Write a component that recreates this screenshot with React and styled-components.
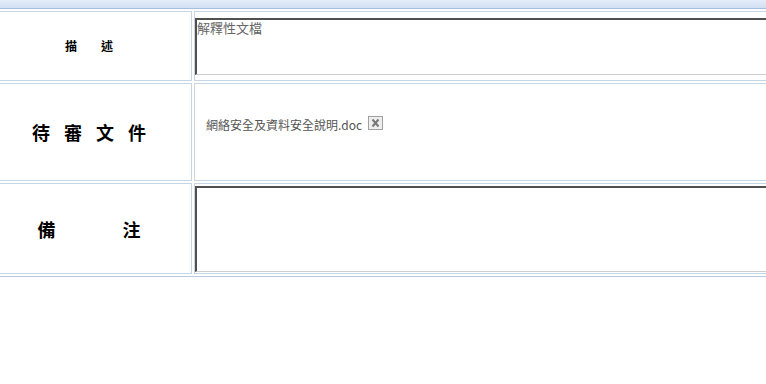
import React from 'react';
import styled, { createGlobalStyle } from 'styled-components';

const GlobalStyle = createGlobalStyle`
  html, body {
    margin: 0;
    padding: 0;
    background: #ffffff;
    overflow: hidden;
  }
  body {
    font-family: "Noto Sans CJK TC", "Noto Sans", sans-serif;
  }
`;

const Page = styled.div`
  width: 766px;
  height: 384px;
  overflow: hidden;
`;

const TopBand = styled.div`
  height: 8px;
  background: linear-gradient(#e4edf9, #d3e0f3);
`;

const FormTable = styled.table`
  width: 840px;
  margin-left: -17px;
  table-layout: fixed;
  border-collapse: separate;
  border-spacing: 2px;
  border: 1px solid #b9cbe2;
  border-top-color: #a9bedd;
`;

const LabelCol = styled.col`
  width: 206px;
`;

const LabelCell = styled.td`
  height: ${p => p.h}px;
  padding: 0;
  border: 1px solid #c6d6e3;
  vertical-align: middle;
`;

const FieldCell = styled.td`
  padding: ${p => p.pad || '0'};
  border: 1px solid #c6d6e3;
  vertical-align: middle;
`;

const Label = styled.div`
  display: flex;
  justify-content: center;
  gap: ${p => p.gap}px;
  font-size: ${p => p.size}px;
  font-weight: 700;
  color: #000;
  line-height: 1;
  span {
    display: block;
  }
`;

const TextBox = styled.textarea`
  display: block;
  width: 610px;
  height: ${p => p.h}px;
  margin: 0;
  padding: 0;
  box-sizing: border-box;
  resize: none;
  outline: none;
  border-top: 2px solid #505050;
  border-left: 2px solid #505050;
  border-right: 1px solid #cfcfcf;
  border-bottom: 1px solid #cfcfcf;
  font-family: "Noto Sans CJK TC", "Noto Sans", sans-serif;
  font-size: 13px;
  line-height: 15px;
  color: #666;
  background: #fff;
`;

const FileRow = styled.div`
  display: flex;
  align-items: center;
  gap: 6px;
`;

const FileName = styled.span`
  font-size: 12px;
  line-height: 16px;
  color: #555;
  padding-top: 4px;
`;

const RemoveButton = styled.span`
  display: inline-flex;
  width: 15px;
  height: 14px;
  margin-top: -1px;
`;

const Spaced = ({ chars, size, gap }) => (
  <Label size={size} gap={gap}>
    {chars.map((c, i) => (
      <span key={i}>{c}</span>
    ))}
  </Label>
);

const App = () => (
  <Page>
    <GlobalStyle />
    <TopBand />
    <FormTable>
      <colgroup>
        <LabelCol />
        <col />
      </colgroup>
      <tbody>
        <tr>
          <LabelCell h={68}>
            <Spaced chars={['描', '述']} size={12} gap={24} />
          </LabelCell>
          <FieldCell>
            <TextBox h={57} readOnly defaultValue="解釋性文檔" />
          </FieldCell>
        </tr>
        <tr>
          <LabelCell h={96}>
            <Spaced chars={['待', '審', '文', '件']} size={18} gap={14} />
          </LabelCell>
          <FieldCell pad="0 0 18px 11px">
            <FileRow>
              <FileName>網絡安全及資料安全說明.doc</FileName>
              <RemoveButton>
                <svg width="15" height="14" viewBox="0 0 15 14">
                  <rect x="0.5" y="0.5" width="14" height="13" fill="#eeeeee" stroke="#a0a0a0" />
                  <path d="M4.5 3.5 L10.5 10.5 M10.5 3.5 L4.5 10.5" stroke="#777" strokeWidth="2" />
                </svg>
              </RemoveButton>
            </FileRow>
          </FieldCell>
        </tr>
        <tr>
          <LabelCell h={89}>
            <Spaced chars={['備', '注']} size={18} gap={67} />
          </LabelCell>
          <FieldCell>
            <TextBox h={86} readOnly defaultValue="" />
          </FieldCell>
        </tr>
      </tbody>
    </FormTable>
  </Page>
);

export default App;
